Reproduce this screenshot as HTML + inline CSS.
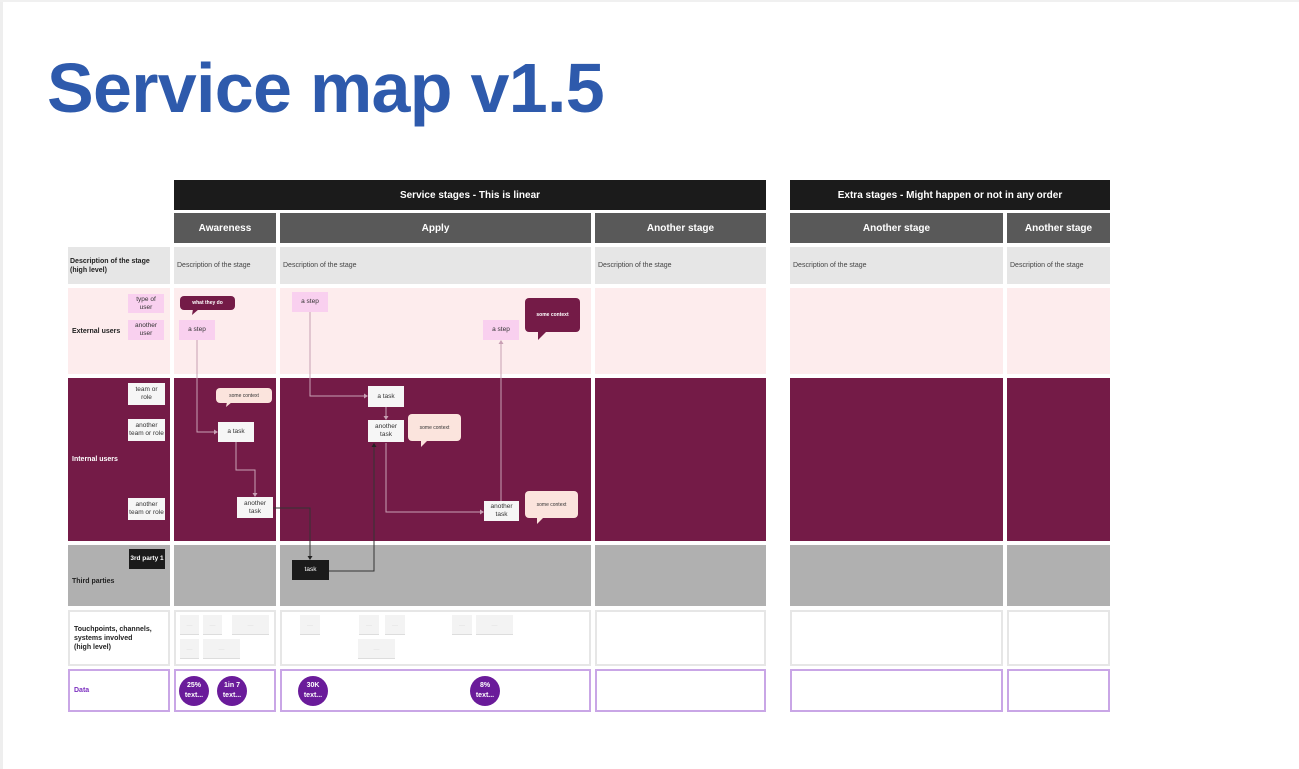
<!DOCTYPE html>
<html><head><meta charset="utf-8">
<style>
*{margin:0;padding:0;box-sizing:border-box}
body{width:1299px;height:769px;background:#fff;position:relative;overflow:hidden;font-family:"Liberation Sans",Arial,sans-serif}
.a{position:absolute}
h1{position:absolute;left:47px;top:48px;font-size:70px;font-weight:bold;color:#2e5aac;letter-spacing:-0.7px;line-height:80px}
.blk{background:#1b1b1b;color:#fff;font-size:10px;font-weight:bold;display:flex;align-items:center;justify-content:center}
.stg{background:#595959;color:#fff;font-size:10px;font-weight:bold;display:flex;align-items:center;justify-content:center}
.desc{background:#e6e6e6;font-size:7px;color:#444;padding:15px 0 0 3px}
.lbl{font-size:7px;font-weight:bold;color:#222;display:flex;align-items:center;padding-left:4px;line-height:9px}
.ext{background:#fdeced}
.int{background:#741b47}
.thr{background:#b0b0b0}
.tp{background:#fff;border:2px solid #e6e6e6}
.dt{background:#fff;border:2px solid #c9a6e6}
.box{font-size:6.5px;display:flex;align-items:center;justify-content:center;text-align:center;line-height:8px}
.pk{background:#f9d0ef;color:#333}
.wh{background:#f6f6f6;color:#333}
.bk{background:#1b1b1b;color:#fff}
.bub{font-size:5px;display:flex;align-items:center;justify-content:center;border-radius:4px}
.circ{width:30px;height:30px;border-radius:50%;background:#6a1b9a;color:#fff;font-size:7px;font-weight:bold;text-align:center;line-height:10px;padding-top:5px}
.tb{background:#f3f3f3;border-bottom:1px solid #ddd;font-size:3px;color:#888;display:flex;align-items:center;justify-content:center}
</style></head><body>
<div class="a" style="left:0;top:0;width:3px;height:769px;background:#eee"></div>
<div class="a" style="left:0;top:0;width:1299px;height:2px;background:#f0f0f0"></div>
<h1>Service map v1.5</h1>

<div class="a blk" style="left:174px;top:180px;width:592px;height:30px">Service stages - This is linear</div>
<div class="a blk" style="left:790px;top:180px;width:320px;height:30px">Extra stages - Might happen or not in any order</div>

<div class="a stg" style="left:174px;top:213px;width:102px;height:30px">Awareness</div>
<div class="a stg" style="left:280px;top:213px;width:311px;height:30px">Apply</div>
<div class="a stg" style="left:595px;top:213px;width:171px;height:30px">Another stage</div>
<div class="a stg" style="left:790px;top:213px;width:213px;height:30px">Another stage</div>
<div class="a stg" style="left:1007px;top:213px;width:103px;height:30px">Another stage</div>

<div class="a desc lbl" style="left:68px;top:247px;width:102px;height:37px;padding:0 0 0 2px;font-weight:bold;color:#222">Description of the stage<br>(high level)</div>
<div class="a desc" style="left:174px;top:247px;width:102px;height:37px">Description of the stage</div>
<div class="a desc" style="left:280px;top:247px;width:311px;height:37px">Description of the stage</div>
<div class="a desc" style="left:595px;top:247px;width:171px;height:37px">Description of the stage</div>
<div class="a desc" style="left:790px;top:247px;width:213px;height:37px">Description of the stage</div>
<div class="a desc" style="left:1007px;top:247px;width:103px;height:37px">Description of the stage</div>

<div class="a ext lbl" style="left:68px;top:288px;width:102px;height:86px">External users</div>
<div class="a ext" style="left:174px;top:288px;width:102px;height:86px"></div>
<div class="a ext" style="left:280px;top:288px;width:311px;height:86px"></div>
<div class="a ext" style="left:595px;top:288px;width:171px;height:86px"></div>
<div class="a ext" style="left:790px;top:288px;width:213px;height:86px"></div>
<div class="a ext" style="left:1007px;top:288px;width:103px;height:86px"></div>

<div class="a int lbl" style="left:68px;top:378px;width:102px;height:163px;color:#fff">Internal users</div>
<div class="a int" style="left:174px;top:378px;width:102px;height:163px"></div>
<div class="a int" style="left:280px;top:378px;width:311px;height:163px"></div>
<div class="a int" style="left:595px;top:378px;width:171px;height:163px"></div>
<div class="a int" style="left:790px;top:378px;width:213px;height:163px"></div>
<div class="a int" style="left:1007px;top:378px;width:103px;height:163px"></div>

<div class="a thr lbl" style="left:68px;top:545px;width:102px;height:61px;padding-top:12px">Third parties</div>
<div class="a thr" style="left:174px;top:545px;width:102px;height:61px"></div>
<div class="a thr" style="left:280px;top:545px;width:311px;height:61px"></div>
<div class="a thr" style="left:595px;top:545px;width:171px;height:61px"></div>
<div class="a thr" style="left:790px;top:545px;width:213px;height:61px"></div>
<div class="a thr" style="left:1007px;top:545px;width:103px;height:61px"></div>

<div class="a tp lbl" style="left:68px;top:610px;width:102px;height:56px">Touchpoints, channels,<br>systems involved<br>(high level)</div>
<div class="a tp" style="left:174px;top:610px;width:102px;height:56px"></div>
<div class="a tp" style="left:280px;top:610px;width:311px;height:56px"></div>
<div class="a tp" style="left:595px;top:610px;width:171px;height:56px"></div>
<div class="a tp" style="left:790px;top:610px;width:213px;height:56px"></div>
<div class="a tp" style="left:1007px;top:610px;width:103px;height:56px"></div>

<div class="a dt lbl" style="left:68px;top:669px;width:102px;height:43px;color:#7b2fbf">Data</div>
<div class="a dt" style="left:174px;top:669px;width:102px;height:43px"></div>
<div class="a dt" style="left:280px;top:669px;width:311px;height:43px"></div>
<div class="a dt" style="left:595px;top:669px;width:171px;height:43px"></div>
<div class="a dt" style="left:790px;top:669px;width:213px;height:43px"></div>
<div class="a dt" style="left:1007px;top:669px;width:103px;height:43px"></div>

<svg class="a" style="left:0;top:0" width="1299" height="769">
<g fill="none" stroke="#c8a0b4" stroke-width="1">
<path d="M197 340V432H216"/>
<path d="M236 442V470H255V495"/>
<path d="M310 311V396H366"/>
<path d="M386 407V418"/>
<path d="M386 443V512H482"/>
<path d="M501 501V342"/>
</g>
<g fill="none" stroke="#333" stroke-width="1">
<path d="M272 508H310V558"/>
<path d="M329 571H374V445"/>
</g>
<g fill="#c8a0b4">
<path d="M218 432l-4-2.5v5z"/><path d="M255 497l-2.5-4h5z"/><path d="M368 396l-4-2.5v5z"/><path d="M386 420l-2.5-4h5z"/><path d="M484 512l-4-2.5v5z"/><path d="M501 340l-2.5 4h5z"/>
</g>
<g fill="#222"><path d="M310 560l-2.5-4h5z"/><path d="M374 443l-2.5 4h5z"/></g>
<path d="M193 309l-1 6 7-6z" fill="#741b47"/>
<path d="M538 332l0 8 8-8z" fill="#741b47"/>
<path d="M227 402l-1 5 6-5z" fill="#fbe4dd"/>
<path d="M421 440l0 7 7-7z" fill="#fbe4dd"/>
<path d="M537 517l0 7 7-7z" fill="#fbe4dd"/>
</svg>

<div class="a box pk" style="left:128px;top:294px;width:36px;height:19px">type of<br>user</div>
<div class="a box pk" style="left:128px;top:320px;width:36px;height:20px">another<br>user</div>
<div class="a bub" style="left:180px;top:296px;width:55px;height:14px;background:#741b47;color:#fff;font-weight:bold">what they do</div>
<div class="a box pk" style="left:179px;top:320px;width:36px;height:20px">a step</div>
<div class="a box pk" style="left:292px;top:292px;width:36px;height:20px">a step</div>
<div class="a box pk" style="left:483px;top:320px;width:36px;height:20px">a step</div>
<div class="a bub" style="left:525px;top:298px;width:55px;height:34px;background:#741b47;color:#fff;font-weight:bold">some context</div>

<div class="a box wh" style="left:128px;top:383px;width:37px;height:22px">team or<br>role</div>
<div class="a box wh" style="left:128px;top:419px;width:37px;height:22px">another<br>team or role</div>
<div class="a box wh" style="left:128px;top:498px;width:37px;height:22px">another<br>team or role</div>
<div class="a bub" style="left:216px;top:388px;width:56px;height:15px;background:#fbe4dd;color:#333">some context</div>
<div class="a box wh" style="left:218px;top:422px;width:36px;height:20px">a task</div>
<div class="a box wh" style="left:237px;top:497px;width:36px;height:21px">another<br>task</div>
<div class="a box wh" style="left:368px;top:386px;width:36px;height:21px">a task</div>
<div class="a box wh" style="left:368px;top:420px;width:36px;height:22px">another<br>task</div>
<div class="a bub" style="left:408px;top:414px;width:53px;height:27px;background:#fbe4dd;color:#333">some context</div>
<div class="a box wh" style="left:484px;top:501px;width:35px;height:20px">another<br>task</div>
<div class="a bub" style="left:525px;top:491px;width:53px;height:27px;background:#fbe4dd;color:#333">some context</div>

<div class="a box bk" style="left:129px;top:549px;width:36px;height:20px;font-weight:bold">3rd party 1</div>
<div class="a box bk" style="left:292px;top:560px;width:37px;height:20px">task</div>

<div class="a tb" style="left:180px;top:615px;width:19px;height:20px">······</div>
<div class="a tb" style="left:203px;top:615px;width:19px;height:20px">······</div>
<div class="a tb" style="left:232px;top:615px;width:37px;height:20px">······</div>
<div class="a tb" style="left:180px;top:639px;width:19px;height:20px">······</div>
<div class="a tb" style="left:203px;top:639px;width:37px;height:20px">······</div>
<div class="a tb" style="left:300px;top:615px;width:20px;height:20px">······</div>
<div class="a tb" style="left:359px;top:615px;width:20px;height:20px">······</div>
<div class="a tb" style="left:385px;top:615px;width:20px;height:20px">······</div>
<div class="a tb" style="left:452px;top:615px;width:20px;height:20px">······</div>
<div class="a tb" style="left:476px;top:615px;width:37px;height:20px">······</div>
<div class="a tb" style="left:358px;top:639px;width:37px;height:20px">······</div>

<div class="a circ" style="left:179px;top:676px">25%<br>text...</div>
<div class="a circ" style="left:217px;top:676px">1in 7<br>text...</div>
<div class="a circ" style="left:298px;top:676px">30K<br>text...</div>
<div class="a circ" style="left:470px;top:676px">8%<br>text...</div>
</body></html>
